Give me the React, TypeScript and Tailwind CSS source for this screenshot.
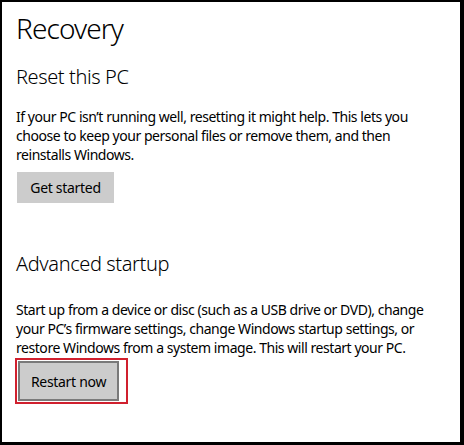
export default function App() {
  return (
    <div className="w-[464px] h-[445px] bg-black pt-[2px] pl-[2px] pr-[4px] pb-[3px]">
      <div
        className="h-full bg-white pl-[14px] pr-2 text-black"
        style={{ fontFamily: '"Noto Sans", "Open Sans", sans-serif' }}
      >
        <h1 className="pt-[8px] text-[28px] leading-[36px] font-light tracking-[-0.9px]">Recovery</h1>

        <h2 className="mt-[18px] text-[20px] leading-[26px] font-light tracking-[-0.4px]">Reset this PC</h2>
        <p className="mt-[17px] text-[14px] leading-[19px] tracking-[-0.45px] whitespace-nowrap">
          If your PC isn’t running well, resetting it might help. This lets you
          <br />
          choose to keep your personal files or remove them, and then
          <br />
          reinstalls Windows.
        </p>
        <button className="mt-[8px] ml-px w-[97px] h-[31px] bg-[#cccccc] text-[14px] tracking-[-0.3px]">
          Get started
        </button>

        <h2 className="mt-[48px] text-[20px] leading-[26px] font-light tracking-[-0.4px]">Advanced startup</h2>
        <p className="mt-[23px] text-[14px] leading-[19px] tracking-[-0.45px] whitespace-nowrap">
          Start up from a device or disc (such as a USB drive or DVD), change
          <br />
          your PC’s firmware settings, change Windows startup settings, or
          <br />
          restore Windows from a system image. This will restart your PC.
        </p>
        <div className="mt-[1px] -ml-px w-[113px] h-[46px] border-2 border-[#d0202e] p-px">
          <button className="w-[101px] h-[40px] bg-[#cccccc] border-2 border-[#7a7a7a] text-[14px] tracking-[-0.3px]">
            Restart now
          </button>
        </div>
      </div>
    </div>
  )
}
